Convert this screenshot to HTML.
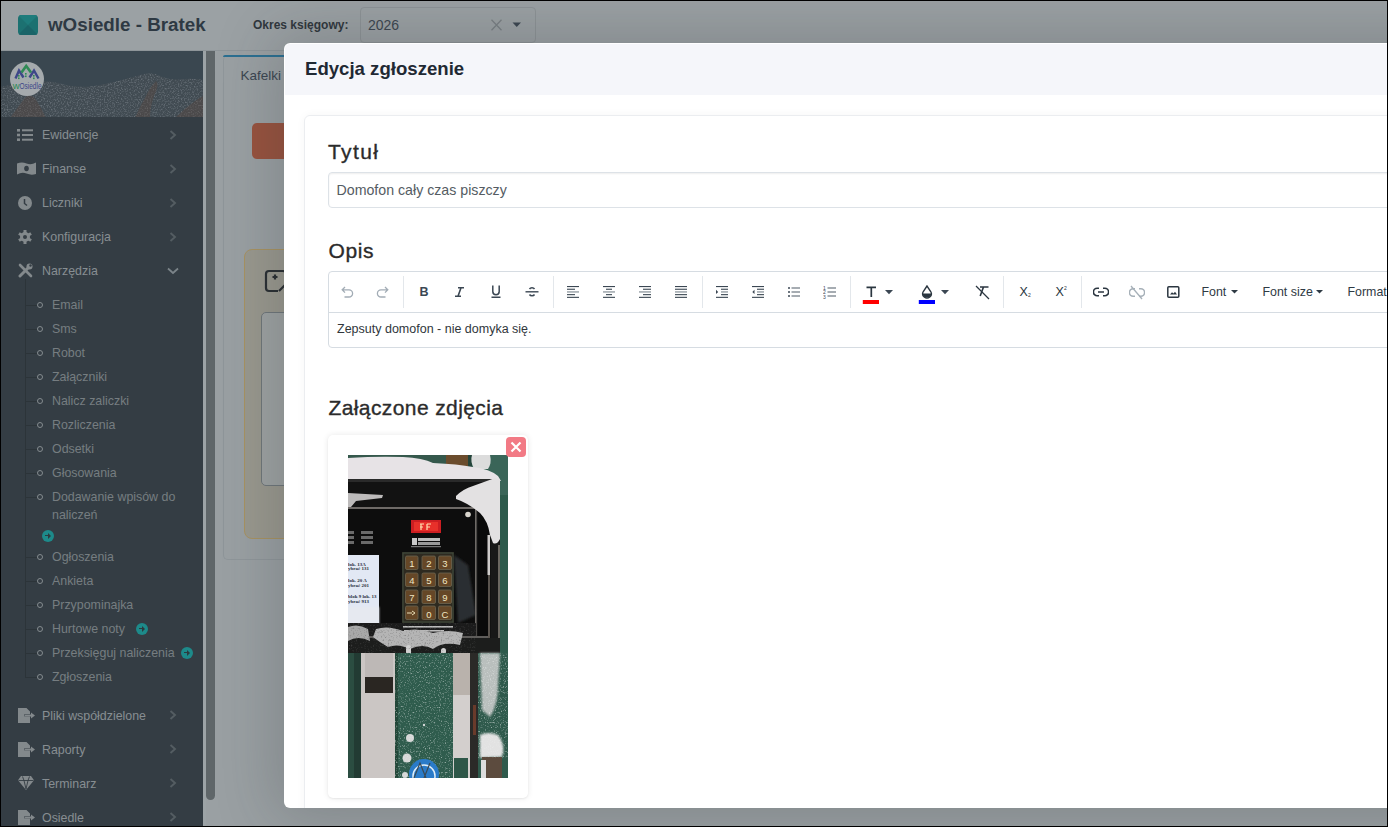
<!DOCTYPE html>
<html><head><meta charset="utf-8">
<style>
*{box-sizing:border-box;margin:0;padding:0}
html,body{width:1388px;height:827px;overflow:hidden;background:#000;font-family:"Liberation Sans",sans-serif}
#f{position:absolute;left:0;top:0;width:1388px;height:827px;overflow:hidden;background:#9aa0a3;clip-path:inset(1px 1px 1px 1px)}
.a{position:absolute}
.t{position:absolute;line-height:1;white-space:nowrap}
.mi{position:absolute;left:42px;font-size:12.4px;line-height:1;color:#878e92;white-space:nowrap}
.si{position:absolute;left:52px;font-size:12.4px;line-height:1;color:#767d81;white-space:nowrap}
.ico{position:absolute;left:17px}
.chev{position:absolute;left:169px}
.dot{position:absolute;left:37px;width:6px;height:6px;border:1px solid #848b8f;border-radius:50%}
.tick{position:absolute;left:25px;width:12px;height:1px;background:#2c3439}
.go{position:absolute;width:12px;height:12px;border-radius:50%;background:#1d8a8a}
.go::after{content:"";position:absolute;left:3px;top:5.2px;width:4px;height:1.6px;background:#2c3a3e}
.go::before{content:"";position:absolute;left:6px;top:3px;border-left:3.5px solid #2c3a3e;border-top:3px solid transparent;border-bottom:3px solid transparent}
.lbl{position:absolute;font-size:21px;line-height:1;color:#2b2b2b;white-space:nowrap;-webkit-text-stroke:0.35px #2b2b2b}
.tb{position:absolute;top:282px}
.sep{position:absolute;top:276px;width:1px;height:32px;background:#e3e7eb}
</style></head>
<body><div id="f">

<!-- ============ NAVBAR ============ -->
<div class="a" style="left:0;top:0;width:1388px;height:51px;background:#9ba1a4;border-bottom:1px solid #8e9599"></div>
<svg class="a" style="left:18px;top:15px" width="20" height="20" viewBox="0 0 20 20">
  <defs><clipPath id="lg"><rect width="20" height="20" rx="3.5"/></clipPath></defs>
  <g clip-path="url(#lg)">
    <rect width="20" height="20" fill="#1c7171"/>
    <polygon points="0,0 20,0 10,10" fill="#1e7c7c"/>
    <polygon points="0,20 20,20 10,10" fill="#1a6468"/>
  </g>
</svg>
<div class="t" style="left:48px;top:16px;font-size:18.8px;font-weight:bold;color:#2e3943">wOsiedle - Bratek</div>
<div class="t" style="left:253px;top:18.5px;font-size:12px;font-weight:bold;color:#30373d">Okres księgowy:</div>
<div class="a" style="left:360px;top:7px;width:176px;height:36px;border:1px solid #8d9396;border-radius:4px"></div>
<div class="t" style="left:368px;top:18px;font-size:14px;color:#3c4650">2026</div>
<svg class="a" style="left:490px;top:19px" width="13" height="12" viewBox="0 0 13 12"><path d="M1.5 0.8L11.5 11.2M11.5 0.8L1.5 11.2" stroke="#7a8084" stroke-width="1.3"/></svg>
<svg class="a" style="left:512px;top:22px" width="10" height="6" viewBox="0 0 10 6"><path d="M0.5 0.5H9L4.75 5z" fill="#3b4650"/></svg>

<!-- ============ SIDEBAR ============ -->
<div class="a" style="left:0;top:51px;width:203px;height:776px;background:#343d44"></div>
<!-- header image -->
<svg class="a" style="left:0;top:51px" width="203" height="67" viewBox="0 0 203 67">
  <defs>
    <filter id="tx" x="0" y="0" width="100%" height="100%">
      <feTurbulence type="fractalNoise" baseFrequency="0.7" numOctaves="2" seed="5" result="n"/>
      <feColorMatrix in="n" type="matrix" values="0 0 0 0 0.18  0 0 0 0 0.21  0 0 0 0 0.24  0 0 0 -3 1.6" result="d"/>
      <feComposite in="d" in2="SourceGraphic" operator="in"/>
    </filter>
  </defs>
  <rect width="203" height="67" fill="#3a4750"/>
  <path d="M0 36Q15 33 30 31Q50 29 62 33Q80 38 100 34Q120 30 140 24Q152 20 160 25Q172 30 185 28Q195 27 203 29V67H0z" fill="#414b52"/>
  <path d="M0 36Q15 33 30 31Q50 29 62 33Q80 38 100 34Q120 30 140 24Q152 20 160 25Q172 30 185 28Q195 27 203 29V67H0z" fill="#30393f" filter="url(#tx)" opacity="0.7"/>
  <g fill="#5a4840" opacity="0.4">
    <path d="M10 67Q18 56 24 48Q28 42 34 46Q40 54 46 67z"/>
    <path d="M135 67Q140 55 146 45Q150 36 156 30Q160 33 154 45Q150 57 150 67z"/>
    <path d="M175 67Q185 57 195 50Q199 47 203 45V67z"/>
  </g>
</svg>
<div class="a" style="left:10px;top:62px;width:34px;height:34px;border-radius:50%;background:#a5aaad"></div>
<svg class="a" style="left:10px;top:62px" width="34" height="34" viewBox="0 0 34 34">
  <path d="M5.5 16.5L9 8.5L13.5 15.5" fill="none" stroke="#3d4788" stroke-width="2.4"/>
  <path d="M19.5 15.5L24 8.5L28.5 16.5" fill="none" stroke="#3d4788" stroke-width="2.4"/>
  <path d="M11.5 10.5L16.2 4L21 10.5" fill="none" stroke="#2f8a55" stroke-width="2.6"/>
  <g fill="#2f8a55"><rect x="8" y="13" width="1.6" height="1.6"/><rect x="8" y="15.5" width="1.6" height="1.6"/><rect x="15" y="11" width="1.6" height="1.6"/><rect x="15" y="13.5" width="1.6" height="1.6"/><rect x="23" y="13" width="1.6" height="1.6"/><rect x="23" y="15.5" width="1.6" height="1.6"/></g>
  <text x="2.8" y="26.5" font-size="9.5" fill="#2f8a55" font-family="Liberation Sans" transform="scale(1 1)">w</text>
  <text x="9.5" y="26.5" font-size="9.8" fill="#3d4788" font-family="Liberation Sans" textLength="22" lengthAdjust="spacingAndGlyphs">Osiedle</text>
</svg>
<div class="a" style="left:0;top:117px;width:203px;height:1px;background:#343d44"></div>

<!-- main items -->
<svg class="ico" style="top:129px" width="16" height="12" viewBox="0 0 16 12" fill="#83898c">
  <rect x="0" y="0" width="3" height="2.6"/><rect x="0" y="4.7" width="3" height="2.6"/><rect x="0" y="9.4" width="3" height="2.6"/>
  <rect x="5" y="0.3" width="11" height="2"/><rect x="5" y="5" width="11" height="2"/><rect x="5" y="9.7" width="11" height="2"/>
</svg>
<div class="mi" style="top:128.5px">Ewidencje</div>
<svg class="ico" style="top:162px" width="19" height="13" viewBox="0 0 19 13" fill="#83898c">
  <path d="M0 1.5Q5 -0.5 9.5 1.5T19 0.5V12Q14 13.5 9.5 11.5T0 12.5z"/>
  <ellipse cx="9.5" cy="6.5" rx="2.3" ry="2.8" fill="#343d44"/>
</svg>
<div class="mi" style="top:162.5px">Finanse</div>
<svg class="ico" style="top:196px;left:18px" width="14" height="14" viewBox="0 0 14 14">
  <circle cx="7" cy="7" r="7" fill="#83898c"/><path d="M6.5 3V7.5L9 9.5" stroke="#343d44" stroke-width="1.5" fill="none"/>
</svg>
<div class="mi" style="top:196.5px">Liczniki</div>
<svg class="ico" style="top:230px;left:18px" width="14" height="14" viewBox="0 0 14 14">
  <g fill="#83898c"><circle cx="7" cy="7" r="5"/>
  <rect x="5.5" y="0" width="3" height="14"/><rect x="5.5" y="0" width="3" height="14" transform="rotate(60 7 7)"/><rect x="5.5" y="0" width="3" height="14" transform="rotate(120 7 7)"/></g>
  <circle cx="7" cy="7" r="2" fill="#343d44"/>
</svg>
<div class="mi" style="top:230.5px">Konfiguracja</div>
<svg class="ico" style="top:263px;left:18px" width="15" height="15" viewBox="0 0 15 15">
  <path d="M2 13L11 4" stroke="#83898c" stroke-width="3" stroke-linecap="round"/>
  <path d="M2 2L13 13" stroke="#83898c" stroke-width="2.6" stroke-linecap="round"/>
  <circle cx="11.5" cy="3.5" r="3" fill="#83898c"/><circle cx="12.5" cy="2.5" r="1.2" fill="#343d44"/>
</svg>
<div class="mi" style="top:264.5px">Narzędzia</div>

<!-- chevrons -->
<svg class="chev" style="top:130px" width="8" height="10" viewBox="0 0 8 10"><path d="M1.5 1L6 5L1.5 9" fill="none" stroke="#545d62" stroke-width="1.9"/></svg>
<svg class="chev" style="top:164px" width="8" height="10" viewBox="0 0 8 10"><path d="M1.5 1L6 5L1.5 9" fill="none" stroke="#545d62" stroke-width="1.9"/></svg>
<svg class="chev" style="top:198px" width="8" height="10" viewBox="0 0 8 10"><path d="M1.5 1L6 5L1.5 9" fill="none" stroke="#545d62" stroke-width="1.9"/></svg>
<svg class="chev" style="top:232px" width="8" height="10" viewBox="0 0 8 10"><path d="M1.5 1L6 5L1.5 9" fill="none" stroke="#545d62" stroke-width="1.9"/></svg>
<svg class="chev" style="top:267px;left:167px" width="12" height="8" viewBox="0 0 12 8"><path d="M1 1.5L6 6L11 1.5" fill="none" stroke="#7b8489" stroke-width="1.8"/></svg>

<!-- tree -->
<div class="a" style="left:24.5px;top:279px;width:1.2px;height:398px;background:#2c3439"></div>
<div class="tick" style="top:304.5px"></div><div class="dot" style="top:301.5px"></div><div class="si" style="top:298.5px">Email</div>
<div class="tick" style="top:328.5px"></div><div class="dot" style="top:325.5px"></div><div class="si" style="top:322.5px">Sms</div>
<div class="tick" style="top:352.5px"></div><div class="dot" style="top:349.5px"></div><div class="si" style="top:346.5px">Robot</div>
<div class="tick" style="top:376.5px"></div><div class="dot" style="top:373.5px"></div><div class="si" style="top:370.5px">Załączniki</div>
<div class="tick" style="top:400.5px"></div><div class="dot" style="top:397.5px"></div><div class="si" style="top:394.5px">Nalicz zaliczki</div>
<div class="tick" style="top:424.5px"></div><div class="dot" style="top:421.5px"></div><div class="si" style="top:418.5px">Rozliczenia</div>
<div class="tick" style="top:448.5px"></div><div class="dot" style="top:445.5px"></div><div class="si" style="top:442.5px">Odsetki</div>
<div class="tick" style="top:472.5px"></div><div class="dot" style="top:469.5px"></div><div class="si" style="top:466.5px">Głosowania</div>
<div class="tick" style="top:496.5px"></div><div class="dot" style="top:493.5px"></div><div class="si" style="top:490.5px">Dodawanie wpisów do</div>
<div class="si" style="top:508.5px">naliczeń</div>
<div class="go" style="left:42px;top:529.5px"></div>
<div class="tick" style="top:556.5px"></div><div class="dot" style="top:553.5px"></div><div class="si" style="top:550.5px">Ogłoszenia</div>
<div class="tick" style="top:580.5px"></div><div class="dot" style="top:577.5px"></div><div class="si" style="top:574.5px">Ankieta</div>
<div class="tick" style="top:604.5px"></div><div class="dot" style="top:601.5px"></div><div class="si" style="top:598.5px">Przypominajka</div>
<div class="tick" style="top:628.5px"></div><div class="dot" style="top:625.5px"></div><div class="si" style="top:622.5px">Hurtowe noty</div>
<div class="go" style="left:135.5px;top:622.5px"></div>
<div class="tick" style="top:652.5px"></div><div class="dot" style="top:649.5px"></div><div class="si" style="top:646.5px">Przeksięguj naliczenia</div>
<div class="go" style="left:180.5px;top:646.5px"></div>
<div class="tick" style="top:676.5px"></div><div class="dot" style="top:673.5px"></div><div class="si" style="top:670.5px">Zgłoszenia</div>

<!-- bottom items -->
<svg class="ico" style="top:708px;left:18px" width="17" height="15" viewBox="0 0 17 15" fill="#83898c">
  <path d="M0 0H8.5L12 3.5V6H6.5V8.5H12V15H0z"/><path d="M7 6.6H13V4.5L17 7.5L13 10.5V8.4H7z"/>
</svg>
<div class="mi" style="top:709.5px">Pliki współdzielone</div>
<svg class="ico" style="top:742px;left:18px" width="17" height="15" viewBox="0 0 17 15" fill="#83898c">
  <path d="M0 0H8.5L12 3.5V6H6.5V8.5H12V15H0z"/><path d="M7 6.6H13V4.5L17 7.5L13 10.5V8.4H7z"/>
</svg>
<div class="mi" style="top:743.5px">Raporty</div>
<svg class="ico" style="top:776px;left:18px" width="16" height="14" viewBox="0 0 16 14" fill="#83898c">
  <path d="M3 0H13L16 4.2L8 14L0 4.2z"/>
  <path d="M0.5 4.5H15.5M4.5 0.5L6 4.5L8 13M11.5 0.5L10 4.5L8 13" stroke="#343d44" stroke-width="0.9" fill="none"/>
</svg>
<div class="mi" style="top:777.5px">Terminarz</div>
<svg class="ico" style="top:810px;left:18px" width="17" height="15" viewBox="0 0 17 15" fill="#83898c">
  <path d="M0 0H8.5L12 3.5V6H6.5V8.5H12V15H0z"/><path d="M7 6.6H13V4.5L17 7.5L13 10.5V8.4H7z"/>
</svg>
<div class="mi" style="top:811.5px">Osiedle</div>
<svg class="chev" style="top:710px" width="8" height="10" viewBox="0 0 8 10"><path d="M1.5 1L6 5L1.5 9" fill="none" stroke="#545d62" stroke-width="1.9"/></svg>
<svg class="chev" style="top:744px" width="8" height="10" viewBox="0 0 8 10"><path d="M1.5 1L6 5L1.5 9" fill="none" stroke="#545d62" stroke-width="1.9"/></svg>
<svg class="chev" style="top:778px" width="8" height="10" viewBox="0 0 8 10"><path d="M1.5 1L6 5L1.5 9" fill="none" stroke="#545d62" stroke-width="1.9"/></svg>
<svg class="chev" style="top:812px" width="8" height="10" viewBox="0 0 8 10"><path d="M1.5 1L6 5L1.5 9" fill="none" stroke="#545d62" stroke-width="1.9"/></svg>

<!-- scrollbar -->
<div class="a" style="left:203px;top:51px;width:3px;height:776px;background:#9ca3a6"></div>
<div class="a" style="left:206px;top:51px;width:9px;height:749px;background:#5f6669;border-radius:0 0 4.5px 4.5px"></div>

<!-- ============ PAGE BEHIND ============ -->
<div class="a" style="left:223px;top:55px;width:200px;height:505px;border-left:1px solid #8f969a;border-bottom:1px solid #8f969a;border-radius:5px 0 0 5px"></div>
<div class="a" style="left:223px;top:55px;width:120px;height:2.2px;background:#2b6f91;border-radius:3px 0 0 0"></div>
<div class="t" style="left:240.5px;top:68.5px;font-size:13.5px;color:#3b4651">Kafelki</div>
<div class="a" style="left:252px;top:123px;width:80px;height:36px;background:#98533f;border-radius:5px"></div>
<div class="a" style="left:244px;top:249px;width:100px;height:290px;background:#9a998f;border:1px solid #a89362;border-radius:8px"></div>
<svg class="a" style="left:264px;top:269px" width="24" height="24" viewBox="0 0 24 24"><path d="M14 22H5a3 3 0 0 1-3-3V5a3 3 0 0 1 3-3h14a3 3 0 0 1 3 3v9M8.5 8h5M11 5.5v5M15 22l7-7M22 22" fill="none" stroke="#2a2f33" stroke-width="2.2"/></svg>
<div class="a" style="left:261px;top:312px;width:80px;height:174px;background:#9ea3a3;border:1px solid #6f777b;border-radius:5px"></div>

<!-- ============ MODAL ============ -->
<div class="a" style="left:284px;top:43px;width:1200px;height:765px;background:#fff;border-radius:6px;box-shadow:0 0 60px 10px rgba(40,45,50,.22)"></div>
<div class="a" style="left:285px;top:44px;width:1200px;height:51px;background:#f5f6fa;border-radius:5px 0 0 0"></div>
<div class="t" style="left:305px;top:60px;font-size:18.6px;font-weight:bold;color:#1f2933">Edycja zgłoszenie</div>
<div class="a" style="left:284px;top:95px;width:1104px;height:713px;overflow:hidden;border-radius:0 0 6px 6px"><div class="a" style="left:-284px;top:-95px;width:1388px;height:827px">

<!-- card -->
<div class="a" style="left:304px;top:115px;width:1200px;height:800px;background:#fff;border:1px solid #ebedf0;border-radius:6px;box-shadow:0 0 10px rgba(0,0,0,.04)"></div>
<div class="lbl" style="left:328px;top:140.5px;letter-spacing:1.4px">Tytuł</div>
<div class="a" style="left:328px;top:172px;width:1200px;height:36px;border:1px solid #dde2e7;border-radius:4px;box-shadow:inset 0 1px 2px rgba(0,0,0,.07)"></div>
<div class="t" style="left:336.5px;top:183px;font-size:14.2px;color:#555c63">Domofon cały czas piszczy</div>

<div class="lbl" style="left:328.5px;top:240px;letter-spacing:0.6px">Opis</div>
<div class="a" style="left:328px;top:271px;width:1200px;height:77px;border:1px solid #d6dce2;border-radius:4px"></div>
<div class="a" style="left:329px;top:312px;width:1200px;height:1px;background:#d6dce2"></div>
<div class="t" style="left:337px;top:323.2px;font-size:12.5px;color:#30363b">Zepsuty domofon - nie domyka się.</div>

<!-- toolbar separators -->
<div class="sep" style="left:403px"></div>
<div class="sep" style="left:552.5px"></div>
<div class="sep" style="left:701.5px"></div>
<div class="sep" style="left:850px"></div>
<div class="sep" style="left:1003px"></div>
<div class="sep" style="left:1080.5px"></div>

<!-- undo / redo -->
<svg class="tb" style="left:341px;top:286px" width="13" height="12" viewBox="0 0 13 12"><path d="M4 1L1.2 3.8L4 6.6M1.5 3.8H8a3.6 3.6 0 0 1 0 7.2H3.5" fill="none" stroke="#a2acb5" stroke-width="1.3"/></svg>
<svg class="tb" style="left:376px;top:286px" width="13" height="12" viewBox="0 0 13 12"><path d="M9 1L11.8 3.8L9 6.6M11.5 3.8H5a3.6 3.6 0 0 0 0 7.2H9.5" fill="none" stroke="#a2acb5" stroke-width="1.3"/></svg>
<!-- B I U S -->
<div class="t" style="left:419.5px;top:285.5px;font-size:12.5px;font-weight:bold;color:#3b4753">B</div>
<svg class="tb" style="left:454px;top:287px" width="11" height="10" viewBox="0 0 11 10"><path d="M4 0.8H10M1 9.2H7M7 0.8L4 9.2" fill="none" stroke="#3b4753" stroke-width="1.6"/></svg>
<svg class="tb" style="left:491px;top:285px" width="10" height="13" viewBox="0 0 10 13"><path d="M1.8 0.5V6.5a3.2 3.2 0 0 0 6.4 0V0.5M0.5 12.3H9.5" fill="none" stroke="#3b4753" stroke-width="1.5"/></svg>
<svg class="tb" style="left:525px;top:286px" width="14" height="12" viewBox="0 0 14 12"><path d="M0.5 5.8H13.5" stroke="#3b4753" stroke-width="1.4"/><path d="M9.5 3A2.8 2.4 0 0 0 4.5 3M4.5 8.5A2.8 2.4 0 0 0 9.5 8.5" fill="none" stroke="#3b4753" stroke-width="1.5"/></svg>
<!-- aligns -->
<svg class="tb" style="left:567px;top:286px" width="12" height="12" viewBox="0 0 12 12" fill="#3b4753"><rect y="0" width="12" height="1.1"/><rect y="2.7" width="8" height="1.1"/><rect y="5.4" width="12" height="1.1" fill="#7b858e"/><rect y="8.1" width="8" height="1.1"/><rect y="10.8" width="12" height="1.1"/></svg>
<svg class="tb" style="left:603px;top:286px" width="12" height="12" viewBox="0 0 12 12" fill="#3b4753"><rect y="0" width="12" height="1.1"/><rect x="3" y="2.7" width="6" height="1.1"/><rect y="5.4" width="12" height="1.1" fill="#7b858e"/><rect x="3" y="8.1" width="6" height="1.1"/><rect y="10.8" width="12" height="1.1"/></svg>
<svg class="tb" style="left:639px;top:286px" width="12" height="12" viewBox="0 0 12 12" fill="#3b4753"><rect y="0" width="12" height="1.1"/><rect x="4" y="2.7" width="8" height="1.1"/><rect y="5.4" width="12" height="1.1" fill="#7b858e"/><rect x="4" y="8.1" width="8" height="1.1"/><rect y="10.8" width="12" height="1.1"/></svg>
<svg class="tb" style="left:675px;top:286px" width="12" height="12" viewBox="0 0 12 12" fill="#3b4753"><rect y="0" width="12" height="1.1"/><rect y="2.7" width="12" height="1.1"/><rect y="5.4" width="12" height="1.1" fill="#7b858e"/><rect y="8.1" width="12" height="1.1"/><rect y="10.8" width="12" height="1.1"/></svg>
<!-- indent / outdent / lists -->
<svg class="tb" style="left:716px;top:286px" width="12" height="12" viewBox="0 0 12 12" fill="#3b4753"><rect y="0" width="12" height="1.1"/><rect x="5" y="2.7" width="7" height="1.1"/><rect x="5" y="5.4" width="7" height="1.1" fill="#7b858e"/><rect x="5" y="8.1" width="7" height="1.1"/><rect y="10.8" width="12" height="1.1"/><path d="M0 3.8L2.2 5.9L0 8z"/></svg>
<svg class="tb" style="left:752px;top:286px" width="12" height="12" viewBox="0 0 12 12" fill="#3b4753"><rect y="0" width="12" height="1.1"/><rect x="5" y="2.7" width="7" height="1.1"/><rect x="5" y="5.4" width="7" height="1.1" fill="#7b858e"/><rect x="5" y="8.1" width="7" height="1.1"/><rect y="10.8" width="12" height="1.1"/><path d="M2.5 3.8L0.3 5.9L2.5 8z"/></svg>
<svg class="tb" style="left:788px;top:287px" width="12" height="10" viewBox="0 0 12 10" fill="#3b4753"><circle cx="1" cy="1" r="1"/><circle cx="1" cy="5" r="1"/><circle cx="1" cy="9" r="1"/><rect x="3.5" y="0.4" width="8.5" height="1.2" fill="#6c7680"/><rect x="3.5" y="4.4" width="8.5" height="1.2" fill="#6c7680"/><rect x="3.5" y="8.4" width="8.5" height="1.2" fill="#6c7680"/></svg>
<svg class="tb" style="left:823px;top:285px" width="13" height="14" viewBox="0 0 13 14"><text x="1.5" y="4.5" font-size="5" font-family="Liberation Sans" fill="#3b4753" text-anchor="middle">1</text><text x="1.5" y="9" font-size="5" font-family="Liberation Sans" fill="#3b4753" text-anchor="middle">2</text><text x="1.5" y="13.5" font-size="5" font-family="Liberation Sans" fill="#3b4753" text-anchor="middle">3</text><rect x="4.5" y="2.4" width="8.5" height="1.2" fill="#6c7680"/><rect x="4.5" y="6.4" width="8.5" height="1.2" fill="#6c7680"/><rect x="4.5" y="10.4" width="8.5" height="1.2" fill="#6c7680"/></svg>
<!-- text color / bg color / clear -->
<svg class="tb" style="left:862px;top:286px" width="18" height="19" viewBox="0 0 18 19"><path d="M4.5 1.3H14M9.3 1.3V11" stroke="#2b3640" stroke-width="1.7" fill="none"/><rect x="0.8" y="14" width="16.2" height="4" fill="#ff0000"/></svg>
<svg class="tb" style="left:885px;top:290px" width="8" height="5" viewBox="0 0 8 5"><path d="M0 0H8L4 4.3z" fill="#3b4753"/></svg>
<svg class="tb" style="left:918px;top:285px" width="18" height="20" viewBox="0 0 18 20"><path d="M9 1L5.3 6.5a4.3 4.3 0 1 0 7.4 0z" fill="none" stroke="#2b3640" stroke-width="1.4"/><path d="M4.8 8.5h8.4a4.2 4.2 0 0 1-8.4 0z" fill="#2b3640"/><rect x="0.8" y="15" width="16.2" height="4" fill="#0000ff"/></svg>
<svg class="tb" style="left:941px;top:290px" width="8" height="5" viewBox="0 0 8 5"><path d="M0 0H8L4 4.3z" fill="#3b4753"/></svg>
<svg class="tb" style="left:975px;top:285px" width="15" height="15" viewBox="0 0 15 15"><path d="M1 1L14 14" stroke="#2b3640" stroke-width="1.3"/><path d="M5 2H13.5M8.5 2L5.2 11" stroke="#2b3640" stroke-width="1.6" fill="none"/></svg>
<!-- sub / sup -->
<div class="t" style="left:1019.5px;top:286px;font-size:12.5px;color:#2b3640">X</div>
<div class="t" style="left:1028px;top:293px;font-size:5px;color:#2b3640">2</div>
<div class="t" style="left:1055.5px;top:286px;font-size:12.5px;color:#2b3640">X</div>
<div class="t" style="left:1064px;top:286px;font-size:5px;color:#2b3640">2</div>
<!-- link / unlink / image -->
<svg class="tb" style="left:1093px;top:287px" width="16" height="10" viewBox="0 0 16 10"><path d="M6 1.2H4.2a3.8 3.8 0 0 0 0 7.6H6M10 1.2h1.8a3.8 3.8 0 0 1 0 7.6H10M5 5H11" fill="none" stroke="#2b3640" stroke-width="1.6"/></svg>
<svg class="tb" style="left:1129px;top:285px" width="16" height="15" viewBox="0 0 16 15"><path d="M6 3.7H4.2a3.8 3.8 0 0 0 0 7.6H6M10 3.7h1.8a3.8 3.8 0 0 1 0 7.6H10" fill="none" stroke="#a6b0b8" stroke-width="1.5"/><path d="M2 1L13 14" stroke="#a6b0b8" stroke-width="1.3"/></svg>
<svg class="tb" style="left:1167px;top:286px" width="13" height="12" viewBox="0 0 13 12"><rect x="0.8" y="0.8" width="11" height="10.4" rx="1" fill="none" stroke="#2b3640" stroke-width="1.5"/><path d="M3 8.5L5 6.2L6.5 7.5L8 5.8L10 8.5z" fill="#2b3640"/></svg>
<!-- dropdowns -->
<div class="t" style="left:1201.5px;top:285.5px;font-size:12.4px;color:#2f3a44">Font</div>
<svg class="tb" style="left:1231px;top:290px" width="7" height="4" viewBox="0 0 7 4"><path d="M0 0H7L3.5 3.5z" fill="#2f3a44"/></svg>
<div class="t" style="left:1262.5px;top:285.5px;font-size:12.4px;color:#2f3a44">Font size</div>
<svg class="tb" style="left:1316px;top:290px" width="7" height="4" viewBox="0 0 7 4"><path d="M0 0H7L3.5 3.5z" fill="#2f3a44"/></svg>
<div class="t" style="left:1347.5px;top:285.5px;font-size:12.4px;color:#2f3a44">Format</div>

<!-- attached photos -->
<div class="lbl" style="left:328.5px;top:397px;letter-spacing:0.4px">Załączone zdjęcia</div>
<div class="a" style="left:328px;top:435px;width:200px;height:363px;background:#fff;border-radius:5px;box-shadow:0 0 6px rgba(0,0,0,.09),0 1px 2px rgba(0,0,0,.06)"></div>
<svg class="a" style="left:348px;top:455px" width="160" height="323" viewBox="0 0 160 323">
<defs>
<filter id="bl" x="-10%" y="-10%" width="120%" height="120%"><feGaussianBlur stdDeviation="0.6"/></filter>
<filter id="bl2" x="-20%" y="-20%" width="140%" height="140%"><feGaussianBlur stdDeviation="1.2"/></filter>
<filter id="spk" x="0" y="0" width="100%" height="100%">
<feTurbulence type="fractalNoise" baseFrequency="0.8" numOctaves="2" seed="11" result="n"/>
<feColorMatrix in="n" type="matrix" values="0 0 0 0 0.85  0 0 0 0 0.87  0 0 0 0 0.87  0 0 0 3.2 -1.75"/>
</filter>
<filter id="spkd" x="0" y="0" width="100%" height="100%">
<feTurbulence type="fractalNoise" baseFrequency="0.6" numOctaves="2" seed="4" result="n"/>
<feColorMatrix in="n" type="matrix" values="0 0 0 0 0.1  0 0 0 0 0.1  0 0 0 0 0.1  0 0 0 3 -1.6"/>
</filter>
</defs>
<rect width="160" height="323" fill="#2d5a4b"/>
<!-- top strip -->
<rect x="0" y="0" width="98" height="12" fill="#35584c"/>
<rect x="98" y="0" width="22" height="12" fill="#6b4c2d"/>
<rect x="120" y="0" width="4" height="12" fill="#24443a"/>
<rect x="140" y="0" width="20" height="40" fill="#3a6558"/>
<g filter="url(#bl)">
<path d="M124 0H142Q144 8 140 14L126 14Q122 6 124 0z" fill="#dcdcdc"/>
<!-- top snow band -->
<path d="M0 3Q30 1 55 2Q75 3 85 8Q110 9 125 12Q142 14 150 21L153 26L0 26z" fill="#e7e3e6"/>
</g>
<!-- box -->
<rect x="0" y="24" width="152" height="176" fill="#121212"/>
<rect x="0" y="24" width="152" height="3" fill="#2a2a2a"/>
<!-- visor bottom line -->
<rect x="0" y="52" width="128" height="2" fill="#6e6a67"/>
<g filter="url(#bl)">
<path d="M0 38L35 40L34 43L8 46L3 52L0 52z" fill="#bdbbbb"/>
<!-- right snow -->

</g>
<!-- panel details -->
<rect x="0" y="54" width="127" height="114" fill="#0d0d0d"/>
<circle cx="120" cy="59.5" r="2.8" fill="#d8d4cc"/>
<!-- left speaker grills -->
<g fill="#6a6a6a" filter="url(#bl)">
<rect x="0" y="76" width="6" height="3"/><rect x="0" y="81" width="6" height="3"/><rect x="0" y="86" width="6" height="3"/>
<rect x="13" y="76" width="12" height="3"/><rect x="13" y="81" width="12" height="3"/><rect x="13" y="86" width="12" height="3"/>
</g>
<!-- display -->
<rect x="63" y="65" width="30" height="13" fill="#cc1e22"/>
<rect x="66" y="67" width="24" height="9" fill="#e8302a"/>
<path d="M72 69h4M72 72h3M73 69v6M79 69h4M79 69v6M79 72h3" stroke="#ffe0b0" stroke-width="1.2"/>
<!-- logo -->
<g filter="url(#bl)"><rect x="64" y="83" width="5" height="7" fill="#c8c8c8"/><rect x="70" y="83" width="22" height="3" fill="#bdbdbd"/><rect x="70" y="87" width="22" height="3" fill="#9a9a9a"/><rect x="63" y="91" width="30" height="1.2" fill="#777"/></g>
<!-- white label -->
<rect x="0" y="100" width="31" height="70" fill="#e2e8f4"/>
<g font-family="Liberation Serif" font-size="5" font-weight="bold" fill="#2a2f40">
<text x="0" y="110.5">łok. 13A</text><text x="0" y="115">ybrać 131</text>
<text x="0" y="127">łok. 20 A</text><text x="0" y="131.5">ybrać 201</text>
<text x="0" y="143">blok 9 lok. 13</text><text x="0" y="147.5">ybrać 913</text>
</g>
<rect x="0" y="152" width="31" height="18" fill="#e6e9f0" filter="url(#bl2)"/>
<!-- keypad -->
<rect x="54" y="97" width="52" height="71" fill="#2e2a20"/>
<rect x="55" y="98" width="50" height="69" fill="none" stroke="#3f4a3c" stroke-width="1.2"/>
<g fill="#654727" stroke="#6d6650" stroke-width="0.8">
<rect x="57.5" y="101" width="12.5" height="13.5" rx="1.5"/><rect x="74" y="101" width="13.5" height="13.5" rx="1.5"/><rect x="90.5" y="101" width="13" height="13.5" rx="1.5"/>
<rect x="57.5" y="118" width="12.5" height="13.5" rx="1.5"/><rect x="74" y="118" width="13.5" height="13.5" rx="1.5"/><rect x="90.5" y="118" width="13" height="13.5" rx="1.5"/>
<rect x="57.5" y="135" width="12.5" height="13.5" rx="1.5"/><rect x="74" y="135" width="13.5" height="13.5" rx="1.5"/><rect x="90.5" y="135" width="13" height="13.5" rx="1.5"/>
<rect x="57.5" y="151" width="12.5" height="13.5" rx="1.5"/><rect x="74" y="151" width="13.5" height="13.5" rx="1.5"/><rect x="90.5" y="151" width="13" height="13.5" rx="1.5"/>
</g>
<g font-family="Liberation Sans" font-size="9.5" fill="#f0e6c4" text-anchor="middle">
<text x="64" y="112">1</text><text x="81" y="112">2</text><text x="97" y="112">3</text>
<text x="64" y="129">4</text><text x="81" y="129">5</text><text x="97" y="129">6</text>
<text x="64" y="146">7</text><text x="81" y="146">8</text><text x="97" y="146">9</text>
<text x="81" y="162.5">0</text><text x="97" y="162.5">C</text>
</g>
<path d="M59 158h5M64 156l3 2-3 2" stroke="#eadfb8" stroke-width="1" fill="none"/>
<!-- glare right of keypad -->
<path d="M106 100L120 110L128 160L110 168z" fill="#2c2e30" filter="url(#bl2)"/>
<!-- right side of box -->
<rect x="127" y="51" width="1.6" height="149" fill="#6e6a66"/>
<rect x="130" y="56" width="11" height="144" fill="#0a0a0a"/>
<rect x="139.5" y="80" width="2.5" height="40" fill="#cfcccb"/><rect x="140" y="120" width="2" height="80" fill="#5a544e"/>
<rect x="143" y="56" width="8" height="144" fill="#181818"/>
<rect x="150" y="90" width="2" height="110" fill="#6a6660"/>
<g filter="url(#bl)"><path d="M108 41Q115 34 125 31L147 23L152 24L152 84Q149 90 145 88L142 80Q140 66 132 58Q120 48 108 44z" fill="#e3e1e2"/></g>
<!-- text under keypad -->

<!-- bottom frame -->
<rect x="0" y="168" width="128" height="15" fill="#1b1b1b"/>
<rect x="0" y="183" width="152" height="15" fill="#1c1d1c"/>
<rect x="0" y="181" width="140" height="2" fill="#5f5d5b"/>
<g fill="#bcbcbc"><rect x="55" y="171" width="50" height="1.6"/><rect x="56" y="175" width="40" height="1.6"/></g>
<g filter="url(#bl)" fill="#b5b5b5">
<path d="M28 174Q40 170 55 176Q70 172 85 178Q100 174 115 178L112 190Q95 186 85 194Q75 188 62 194Q50 188 40 192Q30 186 25 182z"/>
<path d="M0 172Q10 168 20 174L22 186Q10 180 0 186z" fill="#a8a8a8"/>
<rect x="58" y="190" width="5" height="14" rx="2.5" fill="#d0d0d0"/>
<rect x="93" y="193" width="5" height="14" rx="2.5" fill="#d0d0d0"/>
</g>
<!-- lower area -->
<rect x="0" y="198" width="12" height="125" fill="#2b4d41"/>
<rect x="6" y="198" width="7" height="125" fill="#223b33"/>
<rect x="13" y="198" width="34" height="125" fill="#cbc6c4"/>
<g filter="url(#bl)">
<rect x="17" y="198" width="28" height="24" fill="#bdb8b6"/>
<rect x="17" y="222" width="28" height="16" fill="#2b2624"/>
</g>
<rect x="47" y="198" width="58" height="125" fill="#2f5c4d"/>
<rect x="47" y="198" width="3" height="125" fill="#234739"/>
<rect x="105" y="198" width="17" height="125" fill="#b9b2ac"/>
<rect x="105" y="240" width="17" height="83" fill="#d3cfcd"/>
<rect x="122" y="198" width="8" height="125" fill="#2b2a28"/>
<rect x="125" y="250" width="3" height="30" fill="#6a3b2b"/>
<rect x="130" y="198" width="30" height="125" fill="#2f5a4c"/>
<g filter="url(#bl2)" fill="#c9cdcc">
<path d="M132 198H152L150 230Q150 250 142 262L134 255z" fill="#b9bfbd"/>
<path d="M132 280Q140 276 150 280Q158 290 154 302L132 303z" fill="#e2e2e2"/>
</g>
<rect x="134" y="302" width="20" height="21" fill="#5c4b3e"/>
<rect x="133" y="305" width="5" height="18" fill="#dcdcdc"/>
<g fill="#d6d8d8" filter="url(#bl)">
<circle cx="62" cy="283" r="4"/><circle cx="59" cy="303" r="4.5"/><circle cx="57" cy="320" r="3"/><circle cx="76" cy="270" r="1.2"/>
</g>
<rect x="47" y="198" width="58" height="125" filter="url(#spk)" opacity="0.55"/>
<rect x="130" y="198" width="30" height="105" filter="url(#spk)" opacity="0.6"/>
<rect x="0" y="168" width="128" height="30" filter="url(#spkd)" opacity="0.5"/>
<!-- blue sticker -->
<circle cx="76" cy="319" r="15" fill="#2a7bc9"/>
<circle cx="76" cy="321" r="11" fill="none" stroke="#e0eef8" stroke-width="1.5"/>
<path d="M66 323L72 308L78 323M82 308L76 323" stroke="#3a4a55" stroke-width="1.2" fill="none"/>
<rect x="106" y="303" width="14" height="20" fill="#2e5748"/>
</svg>

<div class="a" style="left:506px;top:437px;width:20px;height:20px;background:#f27a85;border-radius:4px"></div>
<svg class="a" style="left:506px;top:437px" width="20" height="20" viewBox="0 0 20 20"><path d="M5.5 5.5L14.5 14.5M14.5 5.5L5.5 14.5" stroke="#fff" stroke-width="2.2"/></svg>

</div></div>
</div></body></html>
